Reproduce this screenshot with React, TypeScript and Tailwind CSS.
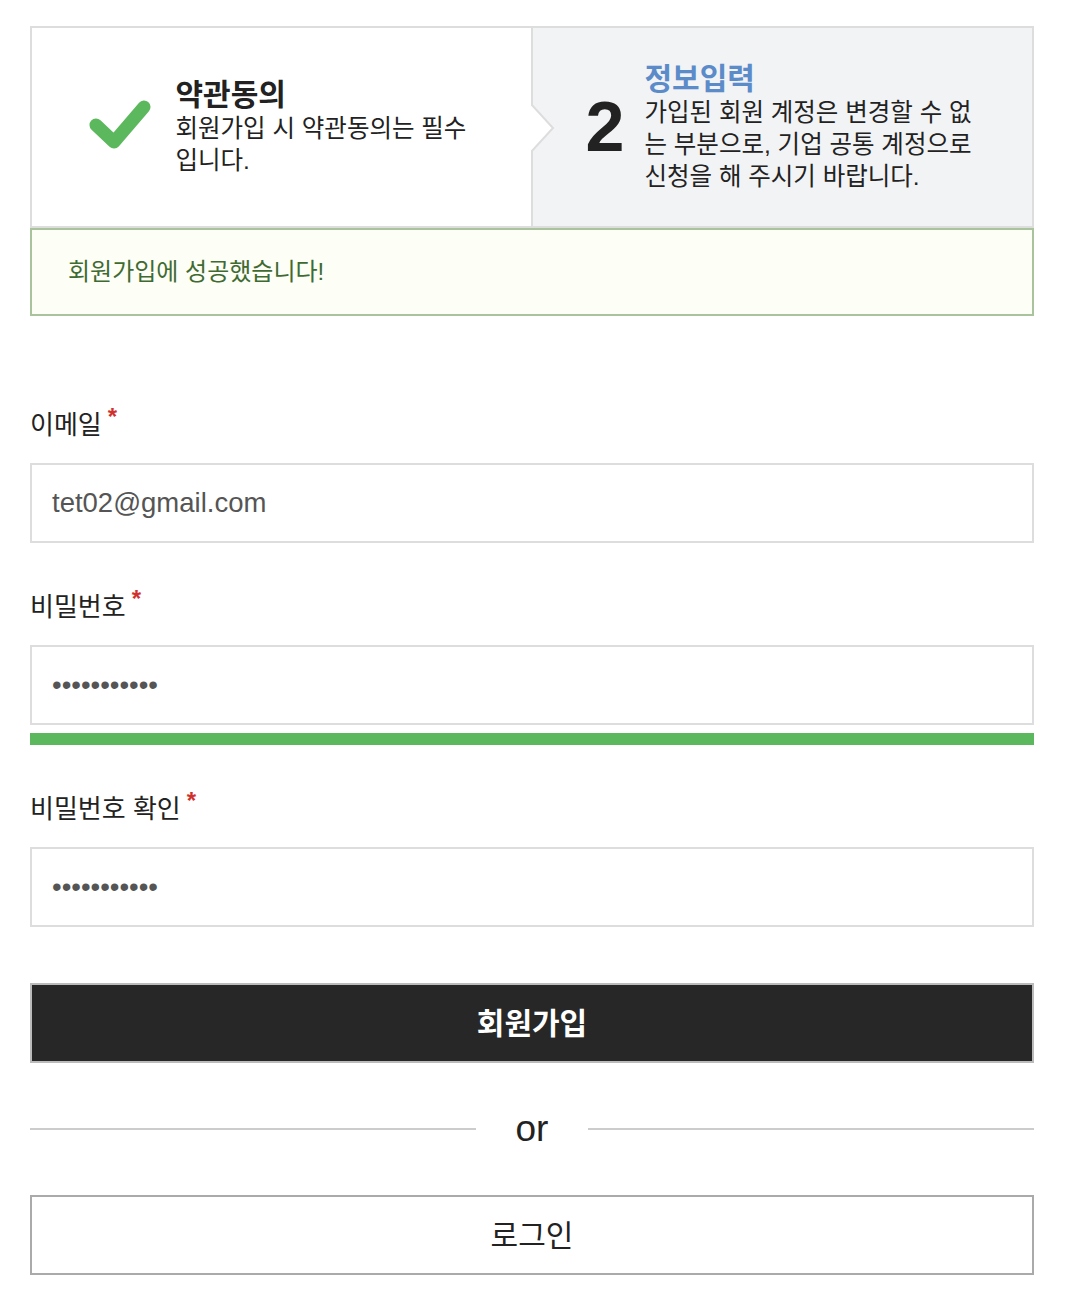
import React from "react";

const font = { fontFamily: '"Liberation Sans", "Noto Sans CJK KR", sans-serif' };

type FieldProps = {
  label: string;
  value: string;
  type?: string;
};

const Field = ({ label, value, type = "text" }: FieldProps) => {
  return (
    <div>
      <label className="flex h-9 items-center text-[26px] text-[#222]">
        {label}
        <span className="ml-1.5 -mt-4 text-[24px] font-bold leading-none text-[#d0312d]">*</span>
      </label>
      <input
        type={type}
        defaultValue={value}
        readOnly
        className="mt-5 block h-20 w-full border-2 border-[#dddddd] bg-white px-5 text-[27.5px] text-[#555] outline-none"
        style={font}
      />
    </div>
  );
};

export default function App() {
  return (
    <div className="min-h-[1316px] bg-white pt-[26px]" style={font}>
      <div className="ml-[30px] w-[1004px]">
        {/* steps */}
        <div className="flex h-[202px] border-2 border-[#dddddd]">
          <div className="flex flex-1 items-center justify-center gap-6 bg-white">
            <svg className="-mt-1" width="64" height="52" viewBox="0 0 64 52">
              <polyline
                points="8,26 26,43 56,8"
                fill="none"
                stroke="#5cb85c"
                strokeWidth="13"
                strokeLinecap="round"
                strokeLinejoin="round"
              />
            </svg>
            <div className="w-[300px] text-[#222]">
              <div className="text-[30px] font-bold leading-9">약관동의</div>
              <div className="text-[24.5px] leading-8">회원가입 시 약관동의는 필수입니다.</div>
            </div>
          </div>
          <div className="relative flex flex-1 items-center justify-center gap-5 border-l-2 border-[#dddddd] bg-[#f2f3f5]">
            <svg className="absolute left-[-2px] top-[76px]" width="24" height="48" viewBox="0 0 24 48">
              <polygon points="0,0 22,24 0,48" fill="#ffffff" />
              <polyline points="0,0 22,24 0,48" fill="none" stroke="#dddddd" strokeWidth="2" />
            </svg>
            <div className="text-[70px] font-bold leading-none text-[#222]">2</div>
            <div className="w-[335px] text-[#222]">
              <div className="text-[30px] font-bold leading-9 text-[#5b8bc9]">정보입력</div>
              <div className="text-[24.5px] leading-8">
                가입된 회원 계정은 변경할 수 없는 부분으로, 기업 공통 계정으로 신청을 해 주시기 바랍니다.
              </div>
            </div>
          </div>
        </div>

        {/* alert */}
        <div className="flex h-[88px] items-center border-2 border-[#a9c49c] bg-[#fdfef6] px-9 text-[24px] text-[#3f6b32]">
          회원가입에 성공했습니다!
        </div>

        {/* form */}
        <div className="mt-[91px] flex flex-col">
          <Field label="이메일" value="tet02@gmail.com" />
          <div className="mt-[46px]">
            <Field label="비밀번호" value="01234567890" type="password" />
            <div className="mt-2 h-3 w-full bg-[#5cb85c]" />
          </div>
          <div className="mt-[46px]">
            <Field label="비밀번호 확인" value="01234567890" type="password" />
          </div>

          <button className="mt-14 h-20 w-full border-2 border-[#bbbbbb] bg-[#272727] text-[30px] font-bold text-white">
            회원가입
          </button>

          <div className="mt-[46px] flex items-center gap-10">
            <div className="h-0.5 flex-1 bg-[#cccccc]" />
            <span className="text-[37px] leading-10 text-[#222]">or</span>
            <div className="h-0.5 flex-1 bg-[#cccccc]" />
          </div>

          <button className="mt-[46px] h-20 w-full border-2 border-[#aaaaaa] bg-white text-[30px] text-[#222]">
            로그인
          </button>
        </div>
      </div>
    </div>
  );
}
